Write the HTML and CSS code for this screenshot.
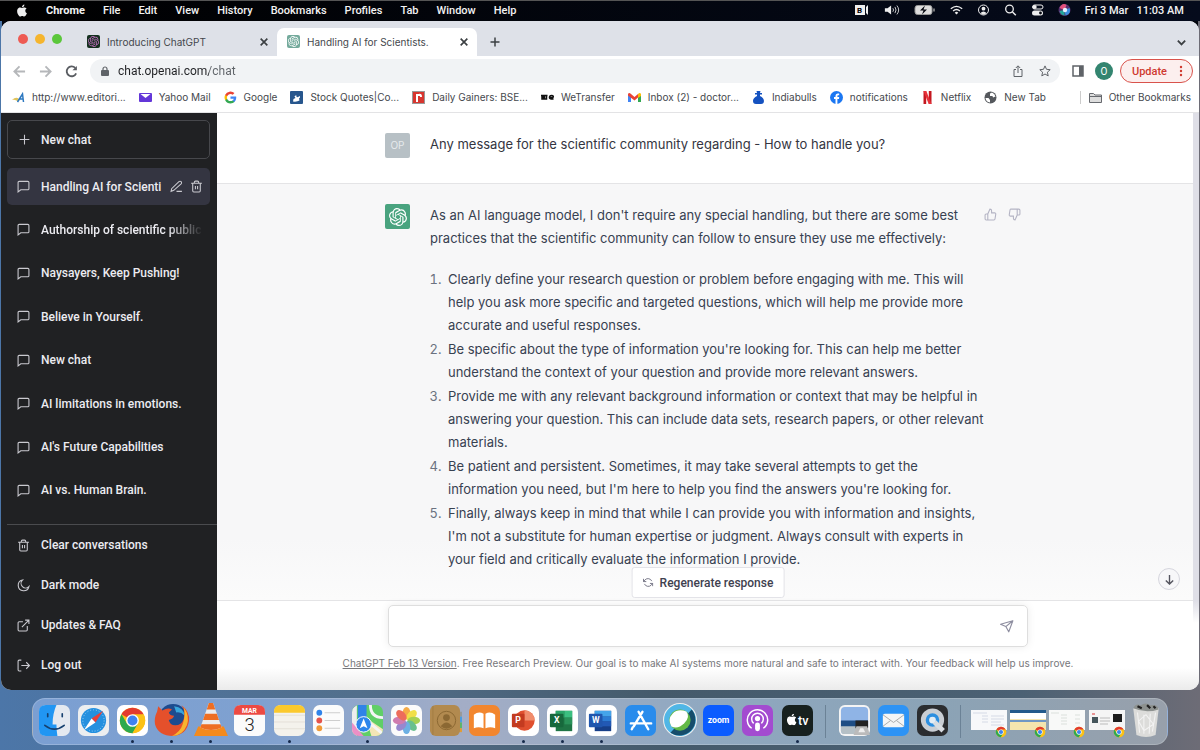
FILE: index.html
```html
<!DOCTYPE html>
<html lang="en">
<head>
    <meta charset="UTF-8">
    <meta name="viewport" content="width=device-width, initial-scale=1.0">
    <title>Handling AI for Scientists.</title>
    <link rel="stylesheet" href="styles.css">
</head>
<body>
    <!-- shared icons -->
    <svg class="defs" aria-hidden="true">
        <symbol id="openai" viewBox="0 0 24 24"><path d="M22.2819 9.8211a5.9847 5.9847 0 0 0-.5157-4.9108 6.0462 6.0462 0 0 0-6.5098-2.9A6.0651 6.0651 0 0 0 4.9807 4.1818a5.9847 5.9847 0 0 0-3.9977 2.9 6.0462 6.0462 0 0 0 .7427 7.0966 5.98 5.98 0 0 0 .511 4.9107 6.051 6.051 0 0 0 6.5146 2.9001A5.9847 5.9847 0 0 0 13.2599 24a6.0557 6.0557 0 0 0 5.7718-4.2058 5.9894 5.9894 0 0 0 3.9977-2.9001 6.0557 6.0557 0 0 0-.7475-7.0729zm-9.022 12.6081a4.4755 4.4755 0 0 1-2.8764-1.0408l.1419-.0804 4.7783-2.7582a.7948.7948 0 0 0 .3927-.6813v-6.7369l2.02 1.1686a.071.071 0 0 1 .038.052v5.5826a4.504 4.504 0 0 1-4.4945 4.4944zm-9.6607-4.1254a4.4708 4.4708 0 0 1-.5346-3.0137l.142.0852 4.783 2.7582a.7712.7712 0 0 0 .7806 0l5.8428-3.3685v2.3324a.0804.0804 0 0 1-.0332.0615L9.74 19.9502a4.4992 4.4992 0 0 1-6.1408-1.6464zM2.3408 7.8956a4.485 4.485 0 0 1 2.3655-1.9728V11.6a.7664.7664 0 0 0 .3879.6765l5.8144 3.3543-2.0201 1.1685a.0757.0757 0 0 1-.071 0l-4.8303-2.7865A4.504 4.504 0 0 1 2.3408 7.872zm16.5963 3.8558L13.1038 8.364 15.1192 7.2a.0757.0757 0 0 1 .071 0l4.8303 2.7913a4.4944 4.4944 0 0 1-.6765 8.1042v-5.6772a.79.79 0 0 0-.407-.667zm2.0107-3.0231l-.142-.0852-4.7735-2.7818a.7759.7759 0 0 0-.7854 0L9.409 9.2297V6.8974a.0662.0662 0 0 1 .0284-.0615l4.8303-2.7866a4.4992 4.4992 0 0 1 6.6802 4.66zM8.3065 12.863l-2.02-1.1638a.0804.0804 0 0 1-.038-.0567V6.0742a4.4992 4.4992 0 0 1 7.3757-3.4537l-.142.0805L8.704 5.459a.7948.7948 0 0 0-.3927.6813zm1.0976-2.3654l2.602-1.4998 2.6069 1.4998v2.9994l-2.5974 1.4997-2.6067-1.4997Z"/></symbol>
        <symbol id="apple" viewBox="0 0 24 24"><path d="M12.152 6.896c-.948 0-2.415-1.078-3.96-1.04-2.04.027-3.91 1.183-4.961 3.014-2.117 3.675-.546 9.103 1.519 12.09 1.013 1.454 2.208 3.09 3.792 3.039 1.52-.065 2.09-.987 3.935-.987 1.831 0 2.35.987 3.96.948 1.637-.026 2.676-1.48 3.676-2.948 1.156-1.688 1.636-3.325 1.662-3.415-.039-.013-3.182-1.221-3.22-4.857-.026-3.04 2.48-4.494 2.597-4.559-1.429-2.09-3.623-2.324-4.39-2.376-2-.156-3.675 1.09-4.61 1.09zM15.53 3.83c.843-1.012 1.4-2.427 1.245-3.83-1.207.052-2.662.805-3.532 1.818-.78.896-1.454 2.338-1.273 3.714 1.338.104 2.715-.688 3.559-1.701"/></symbol>
        <symbol id="chat" viewBox="0 0 24 24"><path d="M22 16a2 2 0 0 1-2 2H7l-5 4V4.500a2 2 0 0 1 2-2h16a2 2 0 0 1 2 2z"/></symbol>
        <symbol id="trash" viewBox="0 0 24 24"><path d="M2 6h20M19 6v14a2 2 0 0 1-2 2H7a2 2 0 0 1-2-2V6m3 0V4a2 2 0 0 1 2-2h4a2 2 0 0 1 2 2v2M10 11v6M14 11v6"/></symbol>
        <symbol id="pencil" viewBox="0 0 24 24"><path d="M12 21h10M16.500 3a2.500 2.500 0 0 1 4 4L7 19l-5 2 1-5z"/></symbol>
        <symbol id="plus" viewBox="0 0 24 24"><path d="M12 3v18M3 12h18"/></symbol>
        <symbol id="cross" viewBox="0 0 24 24"><path d="M4 4l16 16M20 4L4 20"/></symbol>
        <symbol id="thumb" viewBox="0 0 24 24"><path d="M14 9V5a3 3 0 0 0-3-3l-4 9v11h11.300a2 2 0 0 0 2-1.700l1.400-9a2 2 0 0 0-2-2.300zM7 22H4a2 2 0 0 1-2-2v-7a2 2 0 0 1 2-2h3"/></symbol>
        <symbol id="chrome" viewBox="0 0 32 32">
            <circle cx="16" cy="16" r="14" fill="#fbc116"/>
            <path d="M16 16L3.900 9A14 14 0 0 1 28.100 9z" fill="#e33b2e"/>
            <path d="M3.900 9A14 14 0 0 0 16 30l6-10.500L16 16 10 19.500z" fill="#2da94f"/>
            <path d="M16 9h12.100A14 14 0 0 1 16 30l6-10.500z" fill="#fbc116"/>
            <circle cx="16" cy="16" r="7" fill="#fff"/><circle cx="16" cy="16" r="5.500" fill="#3f82f0"/>
        </symbol>
    </svg>

    <header class="menubar">
        <nav class="menus">
            <a href="#" aria-label="Apple"><svg class="apple"><use href="#apple"/></svg></a>
            <a href="#" class="app">Chrome</a>
            <a href="#">File</a>
            <a href="#">Edit</a>
            <a href="#">View</a>
            <a href="#">History</a>
            <a href="#">Bookmarks</a>
            <a href="#">Profiles</a>
            <a href="#">Tab</a>
            <a href="#">Window</a>
            <a href="#">Help</a>
        </nav>
        <div class="status">
            <svg class="rec" viewBox="0 0 16 12"><rect x="1" y="1" width="10" height="10" fill="#eee"/><text x="3" y="9" class="b-mark">B</text><path d="M12 3l2-2v10l-2-2z" fill="#eee"/></svg>
            <svg class="rec" viewBox="0 0 18 12"><path d="M1 4h3l4-3v10L4 8H1z" fill="#eee"/><path d="M10 4q1.500 2 0 4M12.300 2.500q2.500 3.500 0 7M14.500 1q4 5 0 10" fill="none" stroke="#ddd"/></svg>
            <svg class="wide" viewBox="0 0 22 12"><rect x="1" y="1.500" width="17" height="9" rx="2.500" fill="#ddd" stroke="#999"/><path d="M20 4.500v3" stroke="#999" stroke-width="1.500"/><path d="M11 1.500L6 6.500h3.500L8 10.500l5-5H9.500z" fill="#05070f"/></svg>
            <svg viewBox="0 0 16 12"><path d="M1 4.500q7-6 14 0M3.800 7.200q4.200-3.500 8.400 0" fill="none" stroke="#eee" stroke-width="1.700"/><path d="M5.800 9.300q2.200-2 4.400 0L8 11.500z" fill="#eee"/></svg>
            <svg viewBox="0 0 12 12"><circle cx="6" cy="6" r="5" fill="none" stroke="#eee"/><circle cx="6" cy="4.700" r="1.900" fill="#eee"/><path d="M2.800 9.200q3.200-3.500 6.400 0L6 10.700z" fill="#eee"/></svg>
            <svg viewBox="0 0 12 12"><circle cx="5" cy="5" r="3.800" fill="none" stroke="#eee" stroke-width="1.300"/><path d="M8 8l3.300 3.300" stroke="#eee" stroke-width="1.500"/></svg>
            <svg viewBox="0 0 12 12"><rect x="1" y="1" width="10.500" height="4" rx="2" fill="none" stroke="#eee"/><circle cx="3.200" cy="3" r="2" fill="#eee"/><rect x=".5" y="6.500" width="11" height="5" rx="2.500" fill="#eee"/><circle cx="9" cy="9" r="1.400" fill="#05070f"/></svg>
            <svg viewBox="0 0 12 12"><circle cx="6" cy="6" r="6" fill="#56306f"/><path d="M1 4q3-6 7-3L6 6z" fill="#e4507c"/><path d="M11 4q2 6-4 7.500L6 6z" fill="#3b8fe0"/><path d="M1 7q1 4 5 4.500V6z" fill="#24a79b"/><circle cx="6.500" cy="6" r="2.200" fill="#e6f1ff"/></svg>
            <time>Fri 3 Mar</time>
            <time>11:03 AM</time>
        </div>
    </header>

    <div class="window">
        <div class="tabstrip">
            <div class="lights"><i class="red"></i><i class="yellow"></i><i class="green"></i></div>
            <div class="tab">
                <span class="favicon dark"><svg><use href="#openai"/></svg></span>
                <span class="tab-title">Introducing ChatGPT</span>
                <button class="close" aria-label="Close tab"><svg><use href="#cross"/></svg></button>
            </div>
            <div class="tab active">
                <span class="favicon"><svg><use href="#openai"/></svg></span>
                <span class="tab-title">Handling AI for Scientists.</span>
                <button class="close" aria-label="Close tab"><svg><use href="#cross"/></svg></button>
            </div>
            <button class="newtab" aria-label="New tab"><svg><use href="#plus"/></svg></button>
            <button class="tabsearch" aria-label="Search tabs"><svg viewBox="0 0 12 12"><path d="M2 4l4 4 4-4"/></svg></button>
        </div>

        <div class="toolbar">
            <button class="nav" aria-label="Back"><svg viewBox="0 0 14 14"><path d="M13 7H2M7 1.500L1.500 7 7 12.500"/></svg></button>
            <button class="nav" aria-label="Forward"><svg viewBox="0 0 14 14"><path d="M1 7h11M7 1.500L12.500 7 7 12.500"/></svg></button>
            <button class="nav reload" aria-label="Reload"><svg viewBox="0 0 14 14"><path d="M12 9A5.300 5.300 0 1 1 11 3.200"/><path d="M12.800 1v4.700H8z" class="solid"/></svg></button>
            <div class="omnibox">
                <svg class="lock" viewBox="0 0 8 10"><rect y="4" width="8" height="6" rx="1" fill="#5f6368"/><path d="M2 4.500V3a2 2 0 0 1 4 0v1.500" fill="none" stroke="#5f6368" stroke-width="1.200"/></svg>
                <input type="text" aria-label="Address" value="chat.openai.com/chat">
                <button aria-label="Share"><svg viewBox="0 0 12 12"><path d="M4 4.500H2v7h8v-7H8M6 8V1M3.800 3L6 .8 8.200 3"/></svg></button>
                <button aria-label="Bookmark this tab"><svg viewBox="0 0 12 12"><path d="M6 .9l1.500 3.400 3.700.4-2.800 2.500.8 3.700L6 9l-3.200 1.900.8-3.700L.8 4.700l3.700-.4z"/></svg></button>
            </div>
            <button class="panel" aria-label="Side panel"><svg viewBox="0 0 12 12"><path d="M1 1h10v10H1z" fill="none" stroke="#5f6368" stroke-width="1.500"/><path d="M7 1h4v10H7z" fill="#5f6368"/></svg></button>
            <button class="profile">O</button>
            <button class="update">Update <svg viewBox="0 0 4 12"><circle cx="2" cy="2" r="1.200"/><circle cx="2" cy="6" r="1.200"/><circle cx="2" cy="10" r="1.200"/></svg></button>
        </div>

        <nav class="bookmarks">
            <a href="#"><svg viewBox="0 0 13 13"><path d="M0 9q4-4 7-1l-1 2.500Q3 8 0 9z" fill="#e0c45c"/><path d="M5.500 11l5-8 1 8M7 8h4" fill="none" stroke="#2d78c0" stroke-width="1.500"/></svg>http://www.editori...</a>
            <a href="#"><svg viewBox="0 0 13 13"><rect y="2" width="13" height="9" rx="1" fill="#6336d8"/><path d="M1.500 3l5 4 5-4z" fill="#fff"/></svg>Yahoo Mail</a>
            <a href="#"><svg viewBox="0 0 24 24"><path fill="#4285f4" d="M22.600 12.200c0-.8-.1-1.500-.2-2.200H12v4.300h6a5.100 5.100 0 0 1-2.200 3.300v2.800h3.500c2.100-2 3.300-4.800 3.300-8.200z"/><path fill="#34a853" d="M12 23c3 0 5.500-1 7.300-2.600l-3.500-2.800c-1 .7-2.300 1-3.800 1-2.900 0-5.300-1.900-6.200-4.500H2.200v2.800A11 11 0 0 0 12 23z"/><path fill="#fbbc05" d="M5.800 14.100a6.600 6.600 0 0 1 0-4.200V7.100H2.200a11 11 0 0 0 0 9.800z"/><path fill="#ea4335" d="M12 5.400c1.600 0 3 .6 4.200 1.600l3.100-3.100A11 11 0 0 0 2.200 7.100l3.600 2.800C6.700 7.300 9.100 5.400 12 5.400z"/></svg>Google</a>
            <a href="#"><svg viewBox="0 0 13 13"><rect width="13" height="13" rx="1" fill="#27568d"/><path d="M3 10.500q4 .5 6.500-1L9 7.500q1.500-1 1-2.500-2 1.500-3.500 1V4.500Q5 4 4.500 5.500l1 1.500L3.500 8z" fill="#fff"/></svg>Stock Quotes|Co...</a>
            <a href="#"><svg viewBox="0 0 13 13"><rect x=".5" y=".5" width="12" height="12" fill="#d8362f" stroke="#999"/><path d="M5 11V3M4 4h3q2-1 2 2" fill="none" stroke="#fff" stroke-width="2"/></svg>Daily Gainers: BSE...</a>
            <a href="#"><svg viewBox="0 0 13 13"><path d="M0 4.500h6.500M1 4v4h1.500V5h1v3h2V4M12.500 6.500h-4Q8.500 4.500 10.500 4.500t2 2M8.500 6.500q0 2 4 1.500" fill="none" stroke="#111" stroke-width="1.500"/></svg>WeTransfer</a>
            <a href="#"><svg viewBox="0 0 13 13"><path d="M0 3h3v8H0z" fill="#4285f4"/><path d="M10 3h3v8h-3z" fill="#34a853"/><path d="M0 3q1-2 3 0l3.500 3L10 3v3.500L6.500 9.500 0 4.500z" fill="#ea4335"/><path d="M10 3q2-2 3 0v2l-3 2z" fill="#fbbc04"/></svg>Inbox (2) - doctor...</a>
            <a href="#"><svg viewBox="0 0 13 13"><path d="M4.500 0h4L8 2h2v1.500H8V5q4 2 4 5t-3 3H4q-3 0-3-3t4-5V3.500H3V2h2z" fill="#1552c0"/></svg>Indiabulls</a>
            <a href="#"><svg viewBox="0 0 13 13"><circle cx="6.500" cy="6.500" r="6.500" fill="#1b77f2"/><path d="M5.500 13V8H4V6h1.500V5q0-2.500 2.500-2.500h1.200v1.800H8q-.6 0-.6.700v1h1.800L9 8H7.400v5z" fill="#fff"/></svg>notifications</a>
            <a href="#"><svg viewBox="0 0 13 13"><path d="M2.500 0h2.700v13H2.500zM7.800 0h2.700v13H7.800z" fill="#c41820"/><path d="M2.500 0h2.800L10.500 13H7.700z" fill="#e8323a"/></svg>Netflix</a>
            <a href="#"><svg viewBox="0 0 13 13"><circle cx="6.500" cy="6.500" r="6" fill="#55585d"/><path d="M1.500 7h3l1.500 2v2.500Q2 11 1.500 7zM6 2.500l2-1q3 1.500 3.500 4L9 6.500 8.500 5H6z" fill="#fff"/></svg>New Tab</a>
            <a href="#" class="other"><svg viewBox="0 0 13 13"><path d="M.5 2.500h4l1.500 1.500h6.500v7.500H.5zM.5 5.500h12" fill="#ddd" stroke="#66696e"/></svg>Other Bookmarks</a>
        </nav>

        <div class="page">
            <aside class="sidebar">
                <button class="newchat"><svg><use href="#plus"/></svg>New chat</button>
                <nav class="chats">
                    <div class="chat active">
                        <svg><use href="#chat"/></svg><a href="#">Handling AI for Scienti</a>
                        <button aria-label="Rename"><svg><use href="#pencil"/></svg></button>
                        <button aria-label="Delete"><svg><use href="#trash"/></svg></button>
                    </div>
                    <div class="chat fade"><svg><use href="#chat"/></svg><a href="#">Authorship of scientific public</a></div>
                    <div class="chat"><svg><use href="#chat"/></svg><a href="#">Naysayers, Keep Pushing!</a></div>
                    <div class="chat"><svg><use href="#chat"/></svg><a href="#">Believe in Yourself.</a></div>
                    <div class="chat"><svg><use href="#chat"/></svg><a href="#">New chat</a></div>
                    <div class="chat"><svg><use href="#chat"/></svg><a href="#">AI limitations in emotions.</a></div>
                    <div class="chat"><svg><use href="#chat"/></svg><a href="#">AI's Future Capabilities</a></div>
                    <div class="chat"><svg><use href="#chat"/></svg><a href="#">AI vs. Human Brain.</a></div>
                </nav>
                <nav class="settings">
                    <a href="#"><svg><use href="#trash"/></svg>Clear conversations</a>
                    <a href="#"><svg viewBox="0 0 24 24"><path d="M22 14A10 10 0 1 1 10 2a8 8 0 0 0 12 12z"/></svg>Dark mode</a>
                    <a href="#"><svg viewBox="0 0 24 24"><path d="M19 13v7a2 2 0 0 1-2 2H4a2 2 0 0 1-2-2V7a2 2 0 0 1 2-2h7M15 2h7v7M9 15L22 2"/></svg>Updates &amp; FAQ</a>
                    <a href="#"><svg viewBox="0 0 24 24"><path d="M8 22H4a2 2 0 0 1-2-2V4a2 2 0 0 1 2-2h4M17 18l6-6-6-6M23 12H8"/></svg>Log out</a>
                </nav>
            </aside>

            <main class="main">
                <div class="thread">
                    <div class="messages">
                        <section class="message user">
                            <div class="row">
                                <div class="avatar">OP</div>
                                <div class="text"><p>Any message for the scientific community regarding - How to handle you?</p></div>
                            </div>
                        </section>
                        <section class="message bot">
                            <div class="row">
                                <div class="avatar"><svg><use href="#openai"/></svg></div>
                                <div class="text">
                                    <p>As an AI language model, I don't require any special handling, but there are some best practices that the scientific community can follow to ensure they use me effectively:</p>
                                    <ol>
                                        <li>Clearly define your research question or problem before engaging with me. This will help you ask more specific and targeted questions, which will help me provide more accurate and useful responses.</li>
                                        <li>Be specific about the type of information you're looking for. This can help me better understand the context of your question and provide more relevant answers.</li>
                                        <li>Provide me with any relevant background information or context that may be helpful in answering your question. This can include data sets, research papers, or other relevant materials.</li>
                                        <li>Be patient and persistent. Sometimes, it may take several attempts to get the information you need, but I'm here to help you find the answers you're looking for.</li>
                                        <li>Finally, always keep in mind that while I can provide you with information and insights, I'm not a substitute for human expertise or judgment. Always consult with experts in your field and critically evaluate the information I provide.</li>
                                    </ol>
                                </div>
                                <div class="rate">
                                    <button aria-label="Good response"><svg><use href="#thumb"/></svg></button>
                                    <button aria-label="Bad response" class="down"><svg><use href="#thumb"/></svg></button>
                                </div>
                            </div>
                        </section>
                    </div>
                    <div class="scrollbar"></div>
                    <button class="todown" aria-label="Scroll to bottom"><svg viewBox="0 0 12 12"><path d="M6 1v10M2 7l4 4 4-4"/></svg></button>
                </div>
                <div class="composer">
                    <button class="regenerate"><svg viewBox="0 0 24 24"><path d="M2 4v6h6M22 20v-6h-6M20 9A9 9 0 0 0 5.500 6L2 10M22 14l-3.500 4A9 9 0 0 1 4 15"/></svg>Regenerate response</button>
                    <form class="prompt">
                        <input type="text" aria-label="Message">
                        <button type="button" aria-label="Send"><svg viewBox="0 0 24 24"><path d="M22 3L1 9l9 4 5 9zM22 3L10 13"/></svg></button>
                    </form>
                    <p class="note"><a href="#">ChatGPT Feb 13 Version</a>. Free Research Preview. Our goal is to make AI systems more natural and safe to interact with. Your feedback will help us improve.</p>
                </div>
            </main>
        </div>
    </div>

    <footer class="dock">
        <div class="slot"><svg viewBox="0 0 32 32"><rect width="32" height="32" rx="7" fill="#e4e9f0"/><path d="M18 0H7Q0 0 0 7v18q0 7 7 7h12q-1-6-1-12h-4Q14 9 18 0z" fill="#2196f3"/><path d="M9 9v3M24 9v3M6 21q10 8 20 0" fill="none" stroke="#16406f" stroke-width="1.700" stroke-linecap="round"/></svg></div>
        <div class="slot"><svg viewBox="0 0 32 32"><rect width="32" height="32" rx="7" fill="#eceef0"/><circle cx="16" cy="16" r="13" fill="#2490df"/><circle cx="16" cy="16" r="11" fill="none" stroke="#9fd2f5" stroke-dasharray="1 2"/><path d="M26 6L18 18l-4-4z" fill="#e8403a"/><path d="M6 26l8-12 4 4z" fill="#fff"/></svg></div>
        <div class="slot open"><svg viewBox="0 0 32 32"><rect width="32" height="32" rx="7" fill="#fff"/><use href="#chrome" x="1" y="1" width="30" height="30"/></svg></div>
        <div class="slot open"><svg class="full" viewBox="0 0 32 32"><circle cx="17" cy="15" r="14" fill="#1d4b8f"/><path d="M18 3q9 1 10 9-4-4-8-3z" fill="#38a6dc"/><path d="M2 8l1-5 4 4q5-3 9-1l-3 3q1 3 5 3-1 3-5 4 1 5 6 5 6 0 8-6 2-7-2-13 8 6 7 15-2 13-15 14Q3 31 0 20-1 14 2 8z" fill="#e5502b"/><path d="M27 4q6 8 3 17-4 10-14 10 8-4 10-11 3-8 1-16z" fill="#f8b52f"/></svg></div>
        <div class="slot open"><svg class="full" viewBox="0 0 32 32"><path d="M4 22h24l4 9H0z" fill="#f48a1c"/><path d="M14 0h4l8 23q-10 5-20 0z" fill="#ececec"/><path d="M14 0h4l2 6h-8zM10.500 10h11l2 6h-15zM7 20h18l1 3q-10 5-20 0z" fill="#ee6e22"/></svg></div>
        <div class="slot"><svg viewBox="0 0 32 32"><rect width="32" height="32" rx="7" fill="#fbfbfb"/><path d="M0 10V7q0-7 7-7h18q7 0 7 7v3z" fill="#ec4a43"/><text x="16" y="8" class="cal-month">MAR</text><text x="16" y="27" class="cal-day">3</text></svg></div>
        <div class="slot open"><svg viewBox="0 0 32 32"><rect width="32" height="32" rx="7" fill="#f4f2ec"/><path d="M0 8V7q0-7 7-7h18q7 0 7 7v1z" fill="#fbc92d"/><path d="M0 10.500h32M0 17.500h32M0 24.500h32" stroke="#dfdbd2" stroke-width=".8"/></svg></div>
        <div class="slot"><svg viewBox="0 0 32 32"><rect width="32" height="32" rx="7" fill="#fbfbfb"/><path d="M12 8h16M12 16h16M12 24h16" stroke="#ccc"/><circle cx="6.500" cy="8" r="3" fill="#2f83ea"/><circle cx="6.500" cy="16" r="3" fill="#e5534b"/><circle cx="6.500" cy="24" r="3" fill="#f09a37"/></svg></div>
        <div class="slot open"><svg class="clip" viewBox="0 0 32 32"><rect width="32" height="32" fill="#60cf67"/><path d="M6 0h9v20H6z" fill="#2f83e8"/><path d="M0 4l5-4v32H0z" fill="#eee"/><path d="M0 18l12 14H0z" fill="#ec8fc6"/><path d="M14 13l18 12v7H20z" fill="#f3e6b6"/><path d="M13 14l19 16M19 0q0 13 13 13" fill="none" stroke="#f5f5f5" stroke-width="3"/><circle cx="12" cy="20" r="8" fill="#2d86ec" stroke="#fff"/><path d="M12 14l4 10-4-2-4 2z" fill="#fff"/></svg></div>
        <div class="slot"><svg viewBox="0 0 32 32"><rect width="32" height="32" rx="7" fill="#fbfbfb"/><g opacity=".88"><ellipse cx="16" cy="8.500" rx="4" ry="6.500" fill="#f5a02e"/><ellipse cx="16" cy="8.500" rx="4" ry="6.500" fill="#f0dc30" transform="rotate(45 16 16)"/><ellipse cx="16" cy="8.500" rx="4" ry="6.500" fill="#9ccb3b" transform="rotate(90 16 16)"/><ellipse cx="16" cy="8.500" rx="4" ry="6.500" fill="#56b980" transform="rotate(135 16 16)"/><ellipse cx="16" cy="8.500" rx="4" ry="6.500" fill="#5aa6e0" transform="rotate(180 16 16)"/><ellipse cx="16" cy="8.500" rx="4" ry="6.500" fill="#8a79c9" transform="rotate(225 16 16)"/><ellipse cx="16" cy="8.500" rx="4" ry="6.500" fill="#ca6ba6" transform="rotate(270 16 16)"/><ellipse cx="16" cy="8.500" rx="4" ry="6.500" fill="#ec5945" transform="rotate(315 16 16)"/></g></svg></div>
        <div class="slot"><svg viewBox="0 0 32 32"><path d="M28 7h5v5h-5z" fill="#999"/><path d="M28 12h5v6h-5z" fill="#4b9de0"/><path d="M28 18h5v6h-5z" fill="#5bb56a"/><path d="M28 24h5v4h-5z" fill="#e39c35"/><rect width="31" height="32" rx="6" fill="#b28a4f"/><path d="M3 1v30" stroke="#a27c42"/><circle cx="17" cy="16" r="9.500" fill="none" stroke="#8b6833"/><circle cx="17" cy="13" r="3.500" fill="#8b6833"/><path d="M11 22q6-8 12 0-6 5-12 0z" fill="#8b6833"/></svg></div>
        <div class="slot"><svg viewBox="0 0 32 32"><rect width="32" height="32" rx="7" fill="#f2862e"/><path d="M5 10q5-4 10-1v15q-5-2-10 0zM17 9q5-3 10 1v14q-5-2-10 0z" fill="#fff"/></svg></div>
        <div class="slot open"><svg viewBox="0 0 32 32"><rect width="32" height="32" rx="7" fill="#fff"/><circle cx="17" cy="16" r="10.500" fill="#e0502f"/><path d="M17 5.500A10.500 10.500 0 0 1 27.500 16H17z" fill="#f08d6c"/><rect x="4" y="9" width="13" height="14" rx="1" fill="#c33b20"/><text x="10.500" y="19" class="office">P</text></svg></div>
        <div class="slot open"><svg viewBox="0 0 32 32"><rect width="32" height="32" rx="7" fill="#fff"/><path d="M9 6h17v21H9z" fill="#1f7545"/><path d="M9 6h9v7H9z" fill="#2ba468"/><path d="M18 6h8v7h-8z" fill="#3bbf80"/><path d="M18 13h8v7h-8z" fill="#2a9259"/><rect x="3" y="9" width="14" height="14" rx="1" fill="#17683c"/><text x="10" y="19" class="office">X</text></svg></div>
        <div class="slot open"><svg viewBox="0 0 32 32"><rect width="32" height="32" rx="7" fill="#fff"/><path d="M9 6h17v21H9z" fill="#173f88"/><path d="M9 6h17v6H9z" fill="#44a4ea"/><path d="M9 12h17v5H9z" fill="#2c7cd4"/><path d="M9 17h17v5H9z" fill="#2259b5"/><rect x="3" y="9" width="14" height="14" rx="1" fill="#2056ae"/><text x="10" y="19" class="office">W</text></svg></div>
        <div class="slot"><svg viewBox="0 0 32 32"><rect width="32" height="32" rx="7" fill="#298cec"/><path d="M18 7l-9 15M14 7l10 18M6 19h13M22.500 19H27M8 23l-1 2" fill="none" stroke="#fff" stroke-width="2.500" stroke-linecap="round"/></svg></div>
        <div class="slot"><svg class="full" viewBox="0 0 32 32"><circle cx="16" cy="16" r="15.500" fill="#50b6e6" stroke="#eee"/><path d="M27 6A15 15 0 0 1 7 28z" fill="#174d6b"/><circle cx="16" cy="16" r="10" fill="#62b946"/><path d="M22 8Q26 13 20 19T8 22Q4 15 9 10t13-2z" fill="#fff"/></svg></div>
        <div class="slot"><svg viewBox="0 0 32 32"><rect width="32" height="32" rx="7" fill="#0b5cff"/><text x="16" y="19" class="zoom">zoom</text></svg></div>
        <div class="slot"><svg viewBox="0 0 32 32"><rect width="32" height="32" rx="7" fill="#a34bd0"/><g fill="none" stroke="#fff" stroke-width="1.500"><path d="M10 24a10.500 10.500 0 1 1 12 0"/><path d="M12 19a6 6 0 1 1 8 0"/></g><circle cx="16" cy="14" r="2.700" fill="#fff"/><rect x="13.500" y="18" width="5" height="9" rx="2.500" fill="#fff"/></svg></div>
        <div class="slot open"><svg viewBox="0 0 32 32"><rect width="32" height="32" rx="7" fill="#17211f"/><use href="#apple" x="4" y="9" width="12" height="12" fill="#fff"/><text x="22" y="21" class="tv">tv</text></svg></div>
        <div class="divider"></div>
        <div class="slot"><svg viewBox="0 0 32 32"><rect width="32" height="32" rx="6" fill="#f4f4f4"/><rect x="2" y="2" width="28" height="28" rx="4" fill="#8fb4e6"/><path d="M2 16h28v7H2z" fill="#1e4d84"/><path d="M2 22h28v4q0 4-4 4H6q-4 0-4-4z" fill="#b5c0c6"/><path d="M17 16h13v8H17z" fill="#222"/><path d="M15 31l3-9h11l3 9z" fill="#bbb"/><path d="M20 28l2-4h3l2 4z" fill="#eee"/></svg></div>
        <div class="slot"><svg viewBox="0 0 32 32"><rect width="32" height="32" rx="7" fill="#2d93f5"/><rect x="5" y="9" width="22" height="14" rx="2" fill="#f5f5f5"/><path d="M5 10l11 8 11-8M5 22l8-6M27 22l-8-6" fill="none" stroke="#aaa"/></svg></div>
        <div class="slot"><svg viewBox="0 0 32 32"><rect width="32" height="32" rx="7" fill="#2b2d30"/><circle cx="16" cy="15.500" r="9.500" fill="#2d8fe0" stroke="#c9ced4" stroke-width="5"/><circle cx="16" cy="15.500" r="3.500" fill="#e4edf5"/><path d="M18 17.500l9 9" stroke="#d9dde2" stroke-width="5"/></svg></div>
        <div class="divider"></div>
        <div class="slot"><svg class="thumb" viewBox="0 0 36 28"><rect width="36" height="20" fill="#f7f8fa"/><path d="M2 3h14M11 6h6M11 9h6M11 12h6M20 6h13M20 9h13M20 12h10M20 15h13" stroke="#d5dae6"/><use href="#chrome" x="24" y="16" width="12" height="12"/></svg></div>
        <div class="slot"><svg class="thumb" viewBox="0 0 36 28"><rect width="36" height="20" fill="#f4e5ae"/><path d="M0 0h36v3H0z" fill="#235a8c"/><path d="M0 3h36v6H0z" fill="#fff"/><path d="M0 11h36" stroke="#6f97c4" stroke-width="2"/><use href="#chrome" x="24" y="16" width="12" height="12"/></svg></div>
        <div class="slot"><svg class="thumb" viewBox="0 0 36 28"><rect width="36" height="20" fill="#f8f9f8"/><path d="M2 3h8M12 5h6M12 8h6M12 11h6M12 14h6M26 5h5M26 9h5M26 13h5" stroke="#dbe0dc"/><use href="#chrome" x="24" y="16" width="12" height="12"/></svg></div>
        <div class="slot"><svg class="thumb" viewBox="0 0 36 28"><rect width="36" height="20" fill="#f5f5f5"/><path d="M3 7h6v6H3z" fill="#46565c"/><path d="M24 4h9v8h-9z" fill="#1b1b1b"/><path d="M3 4h3" stroke="#d33"/><path d="M11 8h10M11 11h10M11 14h8" stroke="#bbb"/><use href="#chrome" x="24" y="16" width="12" height="12"/></svg></div>
        <div class="slot"><svg class="full" viewBox="0 0 32 32"><path d="M4 5h24l-3 25q-9 4-18 0z" fill="#dcdcda"/><path d="M4 5q2-5 7-3 5-3 9 0 7-1 8 4-12 4-24-1z" fill="#8d918f"/><path d="M8 3l4 2M17 2l3 3M23 3l2 2" stroke="#222" stroke-width="2"/><path d="M8 9l2 19M14 11v18M20 10l-1 19M25 9l-3 18M9 17l7-6 7 9-9 6z" fill="none" stroke="#f3f3f3"/></svg></div>
    </footer>
</body>
</html>
```
FILE: styles.css
```css
* {
    box-sizing: border-box;
}
body {
    margin: 0;
    min-height: 100vh;
    display: flex;
    flex-direction: column;
    font-family: Roboto, "Liberation Sans", sans-serif;
    font-size: 12px;
    background: linear-gradient(90deg, #4c76a8 0, #526f8c 30%, #455a6b 55%, #4b6174 85%, #6d6c76 100%);
}
a {
    color: inherit;
    text-decoration: none;
}
button {
    margin: 0;
    padding: 0;
    border: none;
    background: none;
    color: inherit;
    font: inherit;
    display: flex;
    align-items: center;
    justify-content: center;
    cursor: pointer;
}
svg {
    display: block;
    flex: none;
}
.defs {
    position: absolute;
    width: 0;
    height: 0;
}

/* mac menu bar */
.menubar {
    height: 21px;
    display: flex;
    justify-content: space-between;
    align-items: center;
    padding: 0 16px 2px;
    background: linear-gradient(90deg, #000, #050b1c);
    border-top: 1px solid #555;
    color: #f2f2f2;
    font-size: 11px;
    font-weight: 500;
}
.menus, .status {
    display: flex;
    align-items: center;
    gap: 18px;
}
.menus .app {
    font-weight: 700;
}
.apple {
    width: 12px;
    height: 13px;
    fill: #eee;
}
.status {
    gap: 14px;
}
.status svg {
    width: 13px;
    height: 12px;
}
.status .rec {
    width: 16px;
}
.status .wide {
    width: 22px;
}
.status time + time {
    margin-left: -6px;
}
.b-mark {
    font: bold 8px Roboto, sans-serif;
    fill: #000;
}

/* browser window */
.window {
    flex: 1;
    display: flex;
    flex-direction: column;
    margin: 0 1px;
    border-radius: 10px;
    overflow: hidden;
    background: #fff;
    /* keeps the corners above the window dark like the menu bar */
    box-shadow: 0 -11px 0 -1px #03060e;
}
.menubar {
    position: relative;
}
.tabstrip {
    height: 35px;
    display: flex;
    align-items: flex-end;
    background: #dee1e8;
    font-family: Inter, sans-serif;
    font-size: 10px;
    color: #45484d;
}
.lights {
    width: 76px;
    height: 35px;
    padding-left: 17px;
    display: flex;
    align-items: center;
    gap: 7px;
}
.lights i {
    width: 10px;
    height: 10px;
    border-radius: 50%;
}
.red { background: #ee5b53; }
.yellow { background: #f5b52e; }
.green { background: #5bc73b; }
.tab {
    width: 200px;
    height: 28px;
    padding: 0 8px 1px 10px;
    display: flex;
    align-items: center;
    gap: 7px;
    border-radius: 7px 7px 0 0;
}
.tab.active {
    background: #fff;
}
.tab-title {
    flex: 1;
}
.favicon {
    width: 13px;
    height: 13px;
    border-radius: 2px;
    background: #74aa9c;
    display: flex;
    align-items: center;
    justify-content: center;
}
.favicon svg {
    width: 11px;
    height: 11px;
    fill: #fff;
}
.favicon.dark {
    background: #15301f;
}
.favicon.dark svg {
    fill: #c26fc0;
}
.close svg, .newtab svg {
    width: 10px;
    height: 10px;
    stroke: #3c4043;
    stroke-width: 4;
}
.newtab svg {
    width: 12px;
    height: 12px;
    stroke-width: 3;
}
.newtab, .tabsearch {
    width: 36px;
    height: 28px;
}
.tabsearch {
    margin-left: auto;
}
.tabsearch svg {
    width: 11px;
    height: 11px;
    fill: none;
    stroke: #3c4043;
    stroke-width: 2;
}

.toolbar {
    height: 30px;
    padding: 0 6px 0 11px;
    display: flex;
    align-items: center;
    background: #fff;
}
.nav {
    width: 14px;
    margin-right: 12px;
}
.nav svg {
    width: 13px;
    height: 13px;
    fill: none;
    stroke: #b5b7ba;
    stroke-width: 2;
}
.reload svg {
    stroke: #5a5d62;
}
.reload .solid {
    fill: #5a5d62;
    stroke: none;
}
.omnibox {
    flex: 1;
    height: 24px;
    padding: 0 9px 0 11px;
    display: flex;
    align-items: center;
    gap: 15px;
    border-radius: 12px;
    background: #f1f3f5;
}
.lock {
    width: 8px;
    height: 10px;
    margin-right: -6px;
}
.omnibox input {
    flex: 1;
    padding: 0;
    border: none;
    outline: none;
    font: 12px Roboto, sans-serif;
    /* host in dark, path in grey */
    background: linear-gradient(90deg, #202124 91px, #5f6368 91px);
    -webkit-background-clip: text;
    background-clip: text;
    color: transparent;
}
.omnibox button svg {
    width: 12px;
    height: 12px;
    fill: none;
    stroke: #5f6368;
}
.panel {
    margin: 0 11px 0 12px;
}
.panel svg {
    width: 12px;
    height: 12px;
}
.profile {
    width: 18px;
    height: 18px;
    border-radius: 50%;
    background: #338570;
    color: #fff;
    font-size: 10px;
}
.update {
    height: 24px;
    margin-left: 7px;
    padding: 0 9px 0 11px;
    gap: 12px;
    border: 1px solid #d9534c;
    border-radius: 12px;
    background: #fcefee;
    color: #cf3a30;
    font-size: 11px;
    font-weight: 500;
}
.update svg {
    width: 4px;
    height: 12px;
    fill: #cf3a30;
}
.bookmarks {
    height: 27px;
    padding: 0 8px 4px 11px;
    display: flex;
    align-items: center;
    gap: 13px;
    border-bottom: 1px solid #e3e3e5;
    font-family: Inter, sans-serif;
    font-size: 10px;
    color: #45484d;
    white-space: nowrap;
}
.bookmarks a {
    display: flex;
    align-items: center;
    gap: 7px;
}
.bookmarks svg {
    width: 13px;
    height: 13px;
}
.bookmarks .other {
    margin-left: auto;
    padding-left: 8px;
    border-left: 1px solid #ccc;
}

/* chat page */
.page {
    flex: 1;
    display: flex;
}
.sidebar {
    width: 216px;
    padding: 7px 0 5px 6px;
    display: flex;
    flex-direction: column;
    background: #202123;
    color: #ececf1;
    font-weight: 500;
}
.sidebar svg {
    width: 13px;
    height: 13px;
    fill: none;
    stroke: #c9c9cf;
    stroke-width: 2;
}
.newchat {
    height: 39px;
    margin-right: 7px;
    padding-left: 10px;
    justify-content: flex-start;
    gap: 10px;
    border: 1px solid #47484c;
    border-radius: 5px;
}
.chats {
    flex: 1;
    margin: 9px 7px 15px 0;
    display: flex;
    flex-direction: column;
    justify-content: space-between;
}
.chat {
    height: 37px;
    padding: 0 7px 0 10px;
    display: flex;
    align-items: center;
    gap: 11px;
    border-radius: 5px;
    white-space: nowrap;
}
.chat a {
    flex: 1;
}
.chat.active {
    background: #343541;
    gap: 7px;
}
.chat.active a {
    margin-left: 4px;
}
.chat.fade a {
    -webkit-mask-image: linear-gradient(90deg, #000 78%, transparent);
    mask-image: linear-gradient(90deg, #000 78%, transparent);
}
.settings {
    border-top: 1px solid #4a4b4e;
}
.settings a {
    height: 40px;
    padding-left: 10px;
    display: flex;
    align-items: center;
    gap: 11px;
}
.main {
    flex: 1;
    display: flex;
    flex-direction: column;
    font-family: Inter, sans-serif;
}
.thread {
    flex: 1;
    display: flex;
    position: relative;
}
.messages {
    flex: 1;
    display: flex;
    flex-direction: column;
}
.scrollbar {
    width: 6px;
    background: #dfdfe7;
}
.message {
    padding: 20px 16px 25px;
    border-bottom: 1px solid #e4e4e6;
    font-size: 13px;
    line-height: 23px;
    color: #343541;
}
.message.bot {
    flex: 1;
    padding-bottom: 20px;
    background: linear-gradient(#f7f7f8 85%, #fbfbfb);
    color: #374151;
}
.row {
    max-width: 640px;
    margin: 0 auto;
    display: flex;
}
.avatar {
    flex: none;
    width: 25px;
    height: 25px;
    margin-right: 20px;
    border-radius: 2px;
    display: flex;
    align-items: center;
    justify-content: center;
    background: #b7c0c5;
    color: #e6eaec;
    font-size: 10px;
}
.bot .avatar {
    background: #49a37f;
}
.avatar svg {
    width: 18px;
    height: 18px;
    fill: #fff;
}
.text {
    width: 558px;
}
.text p {
    margin: 0;
    max-width: 540px;
}
/* wider gap after the number */
@counter-style steps {
    system: extends decimal;
    suffix: ".\2002";
}
.text ol {
    margin: 18px 0 0;
    padding-left: 18px;
    list-style: steps;
}
.text li + li {
    margin-top: 1px;
}
.text li::marker {
    color: #6b7280;
}
.rate {
    height: 20px;
    margin-left: -4px;
    display: flex;
    gap: 11px;
}
.rate svg {
    width: 13px;
    height: 13px;
    fill: none;
    stroke: #b4b4c4;
    stroke-width: 2;
}
.rate .down svg {
    transform: rotate(180deg);
}
.todown {
    position: absolute;
    right: 19px;
    bottom: 11px;
    width: 22px;
    height: 22px;
    border: 1px solid #d6d6de;
    border-radius: 50%;
    background: #f7f7f9;
}
.todown svg {
    width: 11px;
    height: 11px;
    fill: none;
    stroke: #55555f;
    stroke-width: 1.5;
}
.composer {
    position: relative;
    padding: 4px 16px 20px;
    background: linear-gradient(#fff 75%, #ebebeb);
}
/* tail of the scrollbar, fading out beside the prompt */
.composer::after {
    content: "";
    position: absolute;
    top: 0;
    right: 0;
    width: 6px;
    height: 22px;
    background: linear-gradient(#dfdfe7, #fff);
}
.regenerate {
    position: absolute;
    left: 50%;
    bottom: 100%;
    transform: translateX(-50%);
    height: 31px;
    margin-bottom: 3px;
    padding: 0 10px;
    gap: 6px;
    border: 1px solid #e3e3e8;
    border-radius: 3px;
    background: #fff;
    color: #40414f;
    font: 500 12px Roboto, sans-serif;
    white-space: nowrap;
}
.regenerate svg {
    width: 11px;
    height: 11px;
    fill: none;
    stroke: #6e6e80;
    stroke-width: 2;
}
.prompt {
    max-width: 640px;
    height: 42px;
    margin: 0 auto;
    padding: 0 13px;
    display: flex;
    align-items: center;
    border: 1px solid #dedede;
    border-radius: 5px;
    background: #fff;
    box-shadow: 0 0 8px rgba(0, 0, 0, 0.08);
}
.prompt input {
    flex: 1;
    border: none;
    outline: none;
    background: none;
    font: 13px Inter, sans-serif;
}
.prompt svg {
    width: 14px;
    height: 14px;
    fill: none;
    stroke: #8e8ea0;
    stroke-width: 2;
    stroke-linejoin: round;
}
.note {
    margin: 10px 0 0;
    text-align: center;
    font-size: 10px;
    line-height: 13px;
    color: #77777b;
}
.note a {
    text-decoration: underline;
}

/* dock */
.dock {
    height: 47px;
    margin: 8px 32px 5px;
    padding: 0 2px;
    display: flex;
    border-radius: 13px;
    border: 1px solid rgba(255, 255, 255, 0.2);
    background: linear-gradient(90deg, #7b9fd2 0, #7fa1d0 20%, #a3adc6 38%, #8fa8c0 60%, #8ba3b6 80%, #98a0ab 100%);
}
.slot {
    flex: 1;
    display: flex;
    flex-direction: column;
    align-items: center;
    padding-top: 6px;
}
.slot svg {
    width: 31px;
    height: 31px;
    overflow: visible;
}
.slot .full {
    width: 34px;
    height: 34px;
    margin: -2px 0 -1px;
}
.slot .clip {
    overflow: hidden;
    border-radius: 7px;
}
.slot .thumb {
    width: 36px;
    height: 28px;
    margin-top: 5px;
}
.slot.open::after {
    content: "";
    width: 3px;
    height: 3px;
    margin-top: 4px;
    border-radius: 50%;
    background: #15294a;
}
.divider {
    width: 18px;
    margin: 6px 0;
    background: linear-gradient(#6b8296, #6b8296) center / 1px 100% no-repeat;
}
.dock text {
    text-anchor: middle;
    font-family: Roboto, sans-serif;
}
.dock .cal-month {
    font-size: 7px;
    font-weight: 700;
    fill: #fff;
}
.dock .cal-day {
    font-size: 19px;
    font-weight: 300;
    fill: #222;
}
.dock .office {
    font-size: 9px;
    font-weight: 700;
    fill: #fff;
}
.dock .zoom {
    font-size: 9px;
    font-weight: 700;
    fill: #fff;
}
.dock .tv {
    font-size: 13px;
    font-weight: 500;
    fill: #fff;
}
```
